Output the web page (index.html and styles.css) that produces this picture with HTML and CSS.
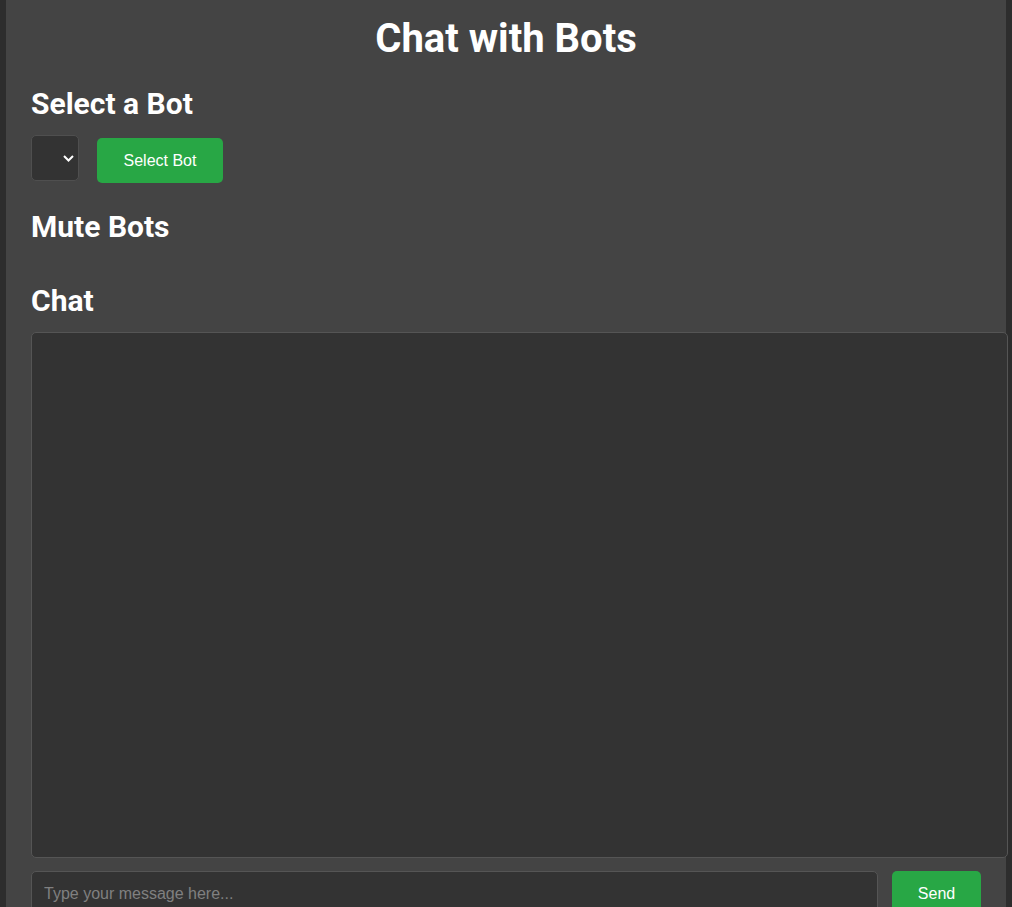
FILE: index.html
```html
<!DOCTYPE html>
<html lang="en">
<head>
<meta charset="utf-8">
<title>Chat with Bots</title>
<link rel="stylesheet" href="styles.css">
</head>
<body>
<div class="container">
  <h1 class="title">Chat with Bots</h1>

  <h2 class="section-title">Select a Bot</h2>
  <div class="select-row">
    <select class="bot-select" aria-label="Bot"></select>
    <button class="btn btn-select">Select Bot</button>
  </div>

  <h2 class="section-title">Mute Bots</h2>
  <div class="mute-list"></div>

  <h2 class="section-title">Chat</h2>
  <div class="chat-box"></div>

  <div class="input-row">
    <input class="msg-input" type="text" placeholder="Type your message here...">
    <button class="btn btn-send">Send</button>
  </div>
</div>
</body>
</html>
```

FILE: styles.css
```css
html, body {
  margin: 0;
  padding: 0;
}

body {
  background: #2d2d2d;
  color: #ffffff;
  font-family: "Liberation Sans", Arial, sans-serif;
}

.container {
  width: 1000px;
  margin: 0 auto;
  padding: 0 25px;
  box-sizing: border-box;
  background: #444444;
  min-height: 100vh;
}

.title {
  font-family: Roboto, "Liberation Sans", sans-serif;
  font-weight: 700;
  font-size: 40px;
  line-height: 47px;
  text-align: center;
  margin: 0;
  padding-top: 15px;
  margin-bottom: 24px;
}

.section-title {
  font-family: Roboto, "Liberation Sans", sans-serif;
  font-weight: 700;
  font-size: 30px;
  line-height: 35px;
  margin: 0 0 14px;
}

.select-row {
  display: flex;
  align-items: flex-start;
  gap: 18px;
  margin-bottom: 26px;
}

.bot-select {
  appearance: none;
  -webkit-appearance: none;
  width: 48px;
  height: 46px;
  background-color: #333333;
  background-image: url("data:image/svg+xml;utf8,<svg xmlns='http://www.w3.org/2000/svg' width='11' height='7' viewBox='0 0 11 7'><path d='M1 1l4.5 4.5 4.5-4.5' fill='none' stroke='white' stroke-width='2'/></svg>");
  background-repeat: no-repeat;
  background-position: 31px 19px;
  border: 1px solid #4f4f4f;
  border-radius: 5px;
  color: #ffffff;
  margin: 0;
}

.btn {
  background: #28a745;
  color: #ffffff;
  border: none;
  border-radius: 5px;
  font-family: "Liberation Sans", Arial, sans-serif;
  font-size: 16px;
  line-height: 19px;
  padding: 13px 0;
  text-align: center;
  cursor: pointer;
}

.btn-select {
  width: 126px;
  margin-top: 3px;
}

.mute-list {
  height: 25px;
}

.chat-box {
  box-sizing: content-box;
  width: 100%;
  height: 500px;
  padding: 12px 13px 12px 12px;
  background: #333333;
  border: 1px solid #555555;
  border-radius: 5px;
  margin-bottom: 13px;
}

.input-row {
  display: flex;
  align-items: flex-start;
  gap: 14px;
}

.msg-input {
  flex: 1;
  height: 46px;
  box-sizing: border-box;
  padding: 0 12px;
  background: #333333;
  border: 1px solid #555555;
  border-radius: 5px;
  color: #ffffff;
  font-family: "Liberation Sans", Arial, sans-serif;
  font-size: 16px;
  outline: none;
}

.msg-input::placeholder {
  color: #808080;
}

.btn-send {
  width: 89px;
}
```
